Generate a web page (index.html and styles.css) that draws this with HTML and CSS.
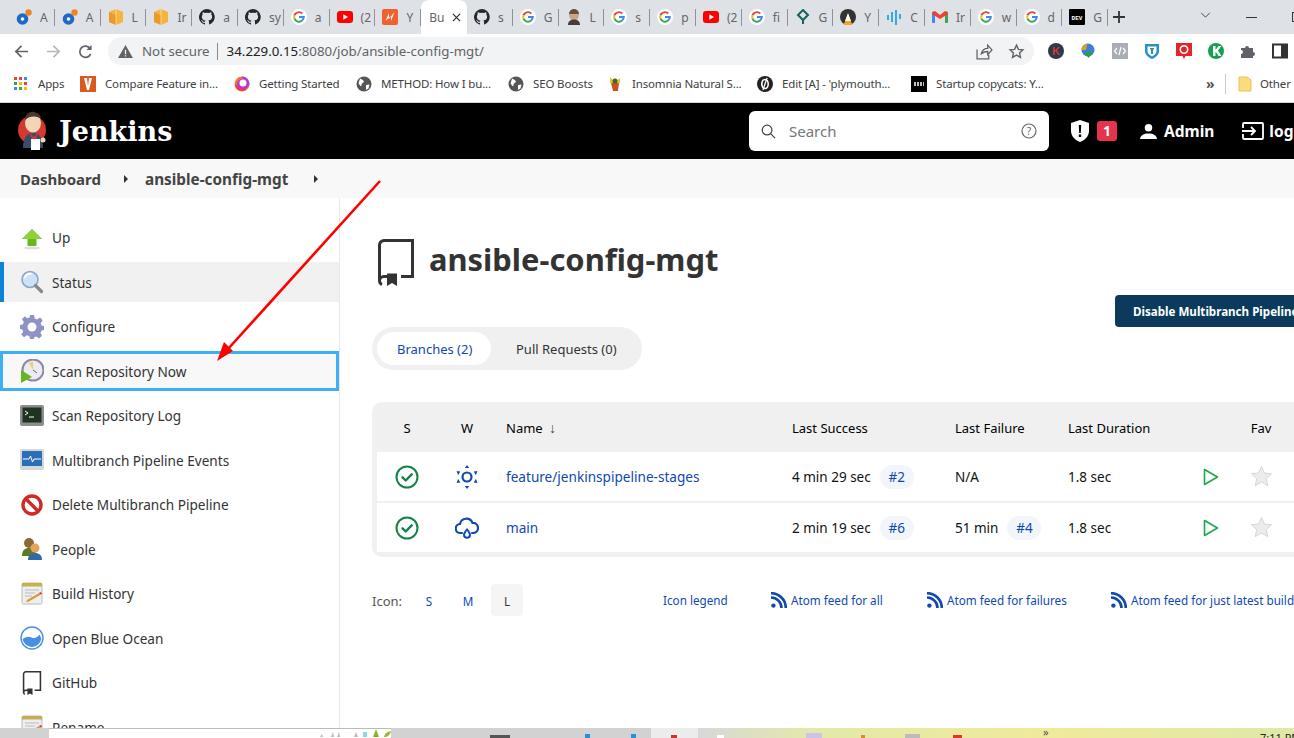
FILE: index.html
```html
<!DOCTYPE html>
<html lang="en">
<head>
<meta charset="utf-8">
<title>ansible-config-mgt [Jenkins]</title>
<link rel="stylesheet" href="styles.css">
</head>
<body>
<svg class="defs" aria-hidden="true">
  <symbol id="g" viewBox="0 0 16 16"><circle cx="8" cy="8" r="8" fill="#fff"/><path d="M4.700 4.600A4.800 4.800 0 0 1 11.300 4.500M3.400 6.400a4.800 4.800 0 0 1 1.300-1.800" fill="none" stroke="#ea4335" stroke-width="2"/><path d="M3.500 6.300a4.800 4.800 0 0 0 0 3.400" fill="none" stroke="#fbbc05" stroke-width="2"/><path d="M3.500 9.700a4.800 4.800 0 0 0 7.600 1.900" fill="none" stroke="#34a853" stroke-width="2"/><path d="M8 8h4.800a4.800 4.800 0 0 1-1.700 3.600" fill="none" stroke="#4285f4" stroke-width="2"/></symbol>
  <symbol id="gh" viewBox="0 0 16 16"><path fill="#24292e" d="M8 0a8 8 0 0 0-2.500 15.600c.4.100.5-.2.500-.4v-1.400c-2.200.5-2.700-1-2.700-1-.4-.9-.9-1.200-.9-1.200-.7-.5.100-.5.100-.5.800.1 1.200.8 1.200.8.700 1.200 1.900.9 2.300.7.100-.5.300-.9.500-1.100-1.800-.2-3.600-.9-3.600-4 0-.9.300-1.600.8-2.100-.1-.2-.4-1 .1-2.100 0 0 .7-.2 2.200.8a7.600 7.600 0 0 1 4 0c1.500-1 2.200-.8 2.200-.8.400 1.100.2 1.900.1 2.100.5.600.8 1.300.8 2.100 0 3.100-1.900 3.700-3.700 3.900.3.300.6.800.6 1.500v2.200c0 .2.100.5.500.4A8 8 0 0 0 8 0z"/></symbol>
  <symbol id="yt" viewBox="0 0 16 16"><rect y="2" width="16" height="12" rx="3" fill="#f00"/><path d="M6.300 5.200v5.600L11 8z" fill="#fff"/></symbol>
  <symbol id="aws" viewBox="0 0 16 16"><path d="M8 0l7 3v10l-7 3-7-3V3z" fill="#f5b33f"/><path d="M8 6.500V16l-7-3V3z" fill="#e99c24"/><path d="M7.500 0h1v16h-1z" fill="#fff" opacity=".5"/></symbol>
  <symbol id="blob" viewBox="0 0 16 16"><circle cx="6.500" cy="10" r="5.800" fill="#1b6ac9"/><circle cx="6.500" cy="10" r="1.800" fill="#fff"/><circle cx="12.500" cy="3.500" r="3.200" fill="#f58220"/></symbol>
  <symbol id="globe" viewBox="0 0 16 16"><circle cx="8" cy="8" r="7.500" fill="#555"/><path d="M4 2.500l3 1.500 1 2-2 1.500-1 3-2.500-3zM10 9l3.500-.5-1 4-2.500 1.500z" fill="#fff"/></symbol>
  <symbol id="star" viewBox="0 0 24 24"><path d="M12 1.500l3.100 6.800 7.300.9-5.400 5 1.500 7.300-6.500-3.700-6.500 3.700L7 14.200l-5.400-5 7.300-.9z"/></symbol>
  <symbol id="book" viewBox="0 0 36 47"><path d="M6 1.500h28.500v36H23M10 37.500H6A4.500 4.500 0 0 0 1.500 42 4 4 0 0 0 4 45.500M1.500 42V6A4.500 4.500 0 0 1 6 1.500" fill="none" stroke="#333" stroke-width="3"/><path d="M9 34.500h10v12.500l-5-3-5 3z" fill="#333"/></symbol>
  <symbol id="ok" viewBox="0 0 24 24"><circle cx="12" cy="12" r="10.500" fill="none" stroke="#138347" stroke-width="2"/><path d="M7.500 12.300l3.200 3.200 6-6.200" fill="none" stroke="#138347" stroke-width="2.400" stroke-linecap="round" stroke-linejoin="round"/></symbol>
  <symbol id="play" viewBox="0 0 16 18"><path d="M1.500 1.500v15L14.500 9z" fill="none" stroke="#1ea64b" stroke-width="1.600" stroke-linejoin="round"/></symbol>
  <symbol id="rss" viewBox="0 0 16 16"><circle cx="2.400" cy="13.600" r="2.200" fill="#1048b0"/><path d="M0 5.500A10.500 10.500 0 0 1 10.500 16M0 1.200A14.800 14.800 0 0 1 14.800 16" fill="none" stroke="#1048b0" stroke-width="2.600"/></symbol>
  <symbol id="note" viewBox="0 0 24 24"><rect x="2" y="1" width="20" height="21" rx="1.500" fill="#eee" stroke="#bbb"/><rect x="2" y="1" width="20" height="3.500" fill="#c9b04f"/><path d="M5 8h14M5 11h10M5 14h7" stroke="#bbb"/><path d="M7 18l12-7 2 1.500-12 7-3 .5z" fill="#d99a3a"/><path d="M19 11l2 1.500 1-1-1.500-1.500z" fill="#c0392b"/></symbol>
</svg>

<div class="browser">
  <div class="tabstrip">
    <div class="tab"><svg class="fav"><use href="#blob"/></svg><span>A</span></div>
    <div class="tab"><svg class="fav"><use href="#blob"/></svg><span>A</span></div>
    <div class="tab"><svg class="fav"><use href="#aws"/></svg><span>L</span></div>
    <div class="tab"><svg class="fav"><use href="#aws"/></svg><span>Ir</span></div>
    <div class="tab"><svg class="fav"><use href="#gh"/></svg><span>a</span></div>
    <div class="tab"><svg class="fav"><use href="#gh"/></svg><span>sy</span></div>
    <div class="tab"><svg class="fav"><use href="#g"/></svg><span>a</span></div>
    <div class="tab"><svg class="fav"><use href="#yt"/></svg><span>(2</span></div>
    <div class="tab"><svg class="fav" viewBox="0 0 16 16"><rect width="16" height="16" rx="2" fill="#f0622d"/><path d="M3.500 12L7 4v6l5.500-7L9 12V7z" fill="#fff"/></svg><span>Y</span></div>
    <div class="tab tab-active"><span>Bu</span><svg class="tab-x" viewBox="0 0 10 10"><path d="M1 1l8 8M9 1l-8 8" stroke="#333" stroke-width="1.400"/></svg></div>
    <div class="tab"><svg class="fav"><use href="#gh"/></svg><span>s</span></div>
    <div class="tab"><svg class="fav"><use href="#g"/></svg><span>G</span></div>
    <div class="tab"><svg class="fav" viewBox="0 0 16 16"><ellipse cx="8" cy="6" rx="5" ry="5.500" fill="#c9a58d"/><path d="M3 5a5 5 0 0 1 10 0H3z" fill="#6b4d3c"/><path d="M2 16c0-4 3-5.500 6-5.500s6 1.500 6 5.500z" fill="#4b3a3a"/></svg><span>L</span></div>
    <div class="tab"><svg class="fav"><use href="#g"/></svg><span>s</span></div>
    <div class="tab"><svg class="fav"><use href="#g"/></svg><span>p</span></div>
    <div class="tab"><svg class="fav"><use href="#yt"/></svg><span>(2</span></div>
    <div class="tab"><svg class="fav"><use href="#g"/></svg><span>fi</span></div>
    <div class="tab"><svg class="fav" viewBox="0 0 16 16"><path d="M8 1l5 5-5 5-5-5zM8 11v4" fill="none" stroke="#14635a" stroke-width="2"/></svg><span>G</span></div>
    <div class="tab"><svg class="fav" viewBox="0 0 16 16"><circle cx="8" cy="8" r="8" fill="#333"/><path d="M8 5l4.500 11h-9z" fill="#f4a62a"/><path d="M8 4l3 8H5z" fill="#fff"/></svg><span>Y</span></div>
    <div class="tab"><svg class="fav" viewBox="0 0 16 16"><path d="M1 6h2v5H1zM5 3h2v10H5zM9 1h2v15H9zM13 5h2v5h-2z" fill="#35a9e0"/></svg><span>C</span></div>
    <div class="tab"><svg class="fav" viewBox="0 0 16 16"><path d="M0 3h3v11H1a1 1 0 0 1-1-1z" fill="#4285f4"/><path d="M13 3h3v10a1 1 0 0 1-1 1h-2z" fill="#34a853"/><path d="M0 3l3-1 5 4 5-4 3 1v2l-8 5-8-5z" fill="#ea4335"/></svg><span>Ir</span></div>
    <div class="tab"><svg class="fav"><use href="#g"/></svg><span>w</span></div>
    <div class="tab"><svg class="fav"><use href="#g"/></svg><span>d</span></div>
    <div class="tab"><svg class="fav" viewBox="0 0 16 16"><rect width="16" height="16" rx="1" fill="#000"/><text x="8" y="11" text-anchor="middle" class="dev">DEV</text></svg><span>G</span></div>
    <svg class="newtab" viewBox="0 0 12 12"><path d="M6 0v12M0 6h12" stroke="#333" stroke-width="1.800"/></svg>
    <div class="winctl">
      <svg class="chev" viewBox="0 0 12 7"><path d="M1 1l5 5 5-5" fill="none" stroke="#333"/></svg>
      <i class="minim"></i>
      <i class="restore"></i>
    </div>
  </div>

  <div class="toolbar">
    <svg class="nav" viewBox="0 0 16 16"><path d="M15 8H2M8 2L2 8l6 6" fill="none" stroke="#5f6368" stroke-width="1.800"/></svg>
    <svg class="nav" viewBox="0 0 16 16"><path d="M1 8h13M8 2l6 6-6 6" fill="none" stroke="#b5b8bc" stroke-width="1.800"/></svg>
    <svg class="nav" viewBox="0 0 16 16"><path d="M13.500 10.500A6 6 0 1 1 13 5" fill="none" stroke="#5f6368" stroke-width="1.800"/><path d="M14.500 1v5.500H9z" fill="#5f6368"/></svg>
    <div class="omnibox">
      <svg class="warn" viewBox="0 0 16 14"><path d="M8 0l8 14H0z" fill="#5f6368"/><path d="M7.300 5h1.400v5H7.300zM7.300 11h1.400v1.400H7.300z" fill="#f1f3f4"/></svg>
      <span class="insecure">Not secure</span>
      <i class="omni-div"></i>
      <span class="url">34.229.0.15<span class="url-dim">:8080/job/ansible-config-mgt/</span></span>
      <svg class="omni-ic" viewBox="0 0 16 16"><path d="M1 6v9h11v-4M5 10c1-4 4-5 6-5V2l4 4.500L11 11V8c-2 0-4 .5-6 2z" fill="none" stroke="#5f6368" stroke-width="1.200"/></svg>
      <svg class="omni-ic star-ic" viewBox="0 0 24 24"><path d="M12 3l2.700 6 6.300.7-4.700 4.300 1.300 6.300-5.600-3.200-5.600 3.200 1.300-6.300L3 9.700 9.300 9z" fill="none" stroke="#5f6368" stroke-width="2"/></svg>
    </div>
    <div class="exts">
      <svg class="ext" viewBox="0 0 16 16"><circle cx="8" cy="8" r="8" fill="#2d3a4a"/><text x="8" y="12" text-anchor="middle" class="ext-k">K</text></svg>
      <svg class="ext" viewBox="0 0 16 16"><circle cx="8" cy="7" r="6.500" fill="#3d7fd1"/><path d="M1.500 7a6.500 6.500 0 0 1 6-6.500L6 7z" fill="#d9a02b"/><path d="M4 9h9l-4.500 6z" fill="#2e9e3f"/></svg>
      <svg class="ext" viewBox="0 0 16 16"><rect width="16" height="16" fill="#a9adb5"/><path d="M5 5L2.500 8 5 11M11 5l2.500 3L11 11M9 4L7 12" fill="none" stroke="#fff" stroke-width="1.200"/></svg>
      <svg class="ext" viewBox="0 0 16 16"><path d="M1 1h14v7c0 4-3.500 6.500-7 8-3.500-1.500-7-4-7-8z" fill="#2a8fd0"/><path d="M3.500 3.500h9V8c0 2.500-2 4-4.500 5.500C5.500 12 3.500 10.500 3.500 8z" fill="#fff"/><path d="M6 5h4v1.500H9V11H7V6.500H6z" fill="#2a8fd0"/></svg>
      <svg class="ext" viewBox="0 0 16 16"><path d="M0 0h16v13H9.500L8 16l-1.500-3H0z" fill="#e3242b"/><circle cx="8" cy="6.500" r="3.700" fill="none" stroke="#fff" stroke-width="1.600"/></svg>
      <svg class="ext" viewBox="0 0 16 16"><circle cx="8" cy="8" r="8" fill="#12a150"/><path d="M5 3h2.500v4L10.500 3h3L10 7.500 13.500 13h-3L7.500 8.500V13H5z" fill="#fff"/></svg>
      <svg class="ext" viewBox="0 0 16 16"><path d="M1 5h4a2 2 0 1 1 4 0h4v4a2 2 0 1 1 0 4v2H1v-4a2 2 0 1 0 0-4z" fill="#5f6368"/></svg>
      <svg class="ext" viewBox="0 0 16 16"><rect x="1" y="1.500" width="14" height="13" fill="none" stroke="#333" stroke-width="2"/><rect x="9" y="2" width="5.500" height="12" fill="#333"/></svg>
    </div>
  </div>

  <div class="bookmarks">
    <div class="bm"><svg class="bm-ic" viewBox="0 0 16 16"><g fill="#ea4335"><rect x="1" y="1" width="3" height="3"/><rect x="6" y="1" width="3" height="3"/></g><rect x="11" y="1" width="3" height="3" fill="#4285f4"/><rect x="1" y="6" width="3" height="3" fill="#34a853"/><rect x="6" y="6" width="3" height="3" fill="#fbbc05"/><rect x="11" y="6" width="3" height="3" fill="#ea4335"/><rect x="1" y="11" width="3" height="3" fill="#4285f4"/><rect x="6" y="11" width="3" height="3" fill="#34a853"/><rect x="11" y="11" width="3" height="3" fill="#fbbc05"/></svg>Apps</div>
    <div class="bm"><svg class="bm-ic" viewBox="0 0 16 16"><rect width="16" height="16" fill="#d9591f"/><path d="M4 2h3l1 8 1-8h3l-3 12H7z" fill="#fff"/></svg>Compare Feature in...</div>
    <div class="bm"><svg class="bm-ic" viewBox="0 0 16 16"><circle cx="8" cy="8" r="7.500" fill="#f6752d"/><path d="M8 .5A7.500 7.500 0 0 1 15.500 8 6 6 0 0 1 8 13 5 5 0 0 1 8 3z" fill="#b23bd1"/><circle cx="9" cy="7" r="3.500" fill="#fff"/><path d="M1 8a7 7 0 0 0 11 5.500L6 12z" fill="#f32f5e"/></svg>Getting Started</div>
    <div class="bm"><svg class="bm-ic"><use href="#globe"/></svg>METHOD: How I bu...</div>
    <div class="bm"><svg class="bm-ic"><use href="#globe"/></svg>SEO Boosts</div>
    <div class="bm"><svg class="bm-ic" viewBox="0 0 16 16"><path d="M3 1l3 3 2-2 1 3 4-3v5H3z" fill="#e7c42c"/><path d="M4 7h8l-1 8H6z" fill="#c9531f"/><circle cx="8" cy="5" r="2.500" fill="#3c6c2e"/></svg>Insomnia Natural S...</div>
    <div class="bm"><svg class="bm-ic" viewBox="0 0 16 16"><circle cx="8" cy="8" r="8" fill="#222"/><ellipse cx="8" cy="8" rx="3.200" ry="4.500" fill="none" stroke="#fff" stroke-width="1.600"/><path d="M10 2L6 14" stroke="#fff" stroke-width="1.300"/></svg>Edit [A] - 'plymouth...</div>
    <div class="bm"><svg class="bm-ic" viewBox="0 0 16 16"><rect width="16" height="16" fill="#000"/><path d="M3 7h10M3 9h10" stroke="#fff" stroke-width="1.600" stroke-dasharray="2 1"/></svg>Startup copycats: Y...</div>
    <div class="bm-end">
      <span class="bm-more">»</span><i class="bm-div"></i>
      <svg class="bm-ic bm-folder" viewBox="0 0 16 16"><path d="M2 1h8l4 3v11H2z" fill="#fbdc7c" stroke="#e9c158"/></svg><span>Other</span>
    </div>
  </div>
</div>

<header class="jk-head">
  <svg class="jk-logo" viewBox="0 0 30 40"><circle cx="14" cy="19" r="14" fill="#d33833"/><ellipse cx="15" cy="12" rx="8" ry="9.500" fill="#f0d6b7"/><path d="M7 9c0-6 5-9 9-8s7 3 7 7c-3-3-11-4-16 1z" fill="#49392f"/><path d="M5 37c0-10 4-15 10-15s10 5 10 15z" fill="#3b4c6b"/><path d="M12 22l4 4 4-4-2 6h-4z" fill="#d33833"/><rect x="13" y="28" width="9" height="11" fill="#fff"/><circle cx="25" cy="29" r="2.500" fill="#f0d6b7"/></svg>
  <div class="jk-name">Jenkins</div>
  <div class="jk-search">
    <svg class="search-ic" viewBox="0 0 16 16"><circle cx="6.500" cy="6.500" r="5.200" fill="none" stroke="#444" stroke-width="1.300"/><path d="M10.500 10.500l4.500 4.500" stroke="#444" stroke-width="1.300"/></svg>
    <span class="search-ph">Search</span>
    <svg class="help-ic" viewBox="0 0 16 16"><circle cx="8" cy="8" r="7" fill="none" stroke="#666" stroke-width="1.200"/><text x="8" y="11.500" text-anchor="middle" class="help-q">?</text></svg>
  </div>
  <svg class="shield" viewBox="0 0 18 22"><path d="M9 0l9 3v8c0 5-4 9-9 11-5-2-9-6-9-11V3z" fill="#fff"/><path d="M7.800 5h2.400l-.4 8H8.200zM7.800 14.500h2.400V17H7.800z" fill="#000"/></svg>
  <span class="jk-badge">1</span>
  <svg class="user-ic" viewBox="0 0 18 16"><circle cx="9" cy="4" r="4" fill="#fff"/><path d="M0 16c0-4 4-6 9-6s9 2 9 6z" fill="#fff"/></svg>
  <span class="jk-user">Admin</span>
  <svg class="out-ic" viewBox="0 0 22 18"><path d="M1 6V2a1 1 0 0 1 1-1h18a1 1 0 0 1 1 1v14a1 1 0 0 1-1 1H2a1 1 0 0 1-1-1v-4M0 9h13M9 5l4 4-4 4" fill="none" stroke="#fff" stroke-width="1.800"/></svg>
  <span class="jk-out">log out</span>
</header>

<nav class="crumbs">
  <a class="crumb crumb-a">Dashboard</a>
  <i class="caret caret-a"></i>
  <a class="crumb crumb-b">ansible-config-mgt</a>
  <i class="caret"></i>
</nav>

<div class="page">
  <aside class="side">
    <a class="item"><svg class="ic" viewBox="0 0 24 24"><path d="M12 3l10 10h-5.500v7h-9v-7H2z" fill="#6cb61e"/><path d="M12 3l10 10H2z" fill="#8fd13f"/><ellipse cx="12" cy="22" rx="8" ry="1.500" fill="#ddd"/></svg>Up</a>
    <a class="item item-cur"><svg class="ic" viewBox="0 0 24 24"><circle cx="10" cy="9.500" r="8" fill="#cfe2f5" stroke="#8aa7c8" stroke-width="1.600"/><path d="M4.500 8a6 6 0 0 1 7-4" fill="none" stroke="#fff" stroke-width="2"/><path d="M15.500 15.500l6 6" stroke="#888" stroke-width="3.200" stroke-linecap="round"/></svg>Status</a>
    <a class="item"><svg class="ic" viewBox="0 0 24 24"><path d="M10 0h4l.6 3.500 2.500 1L20 2.500 22.800 5.300 20.700 8.200l1 2.500L24 11v4l-2.500.6-1 2.500 1.500 2.700-2.800 2.800-2.900-2-2.500 1L14 24h-4l-.6-2.800-2.500-1-2.900 2L1.200 19.400l2-2.700-1-2.500L0 14v-4l2.800-.6 1-2.500L2 4.100 4.800 1.300l2.400 2 2.500-1z" fill="#8f92c4"/><circle cx="12" cy="12" r="4.500" fill="#fff"/></svg>Configure</a>
    <a class="item item-focus"><svg class="ic" viewBox="0 0 24 24"><circle cx="13" cy="11" r="10.500" fill="#ecebf2" stroke="#8b89a6" stroke-width="2"/><path d="M13 11V3a8 8 0 0 0-4 1z" fill="#e8cf72"/><path d="M13 11l4 3" stroke="#666"/><path d="M1 11l11 7-11 6z" fill="#64b51f"/></svg>Scan Repository Now</a>
    <a class="item"><svg class="ic" viewBox="0 0 24 24"><rect y="1" width="24" height="21" rx="2" fill="#8b8f8b"/><rect x="2.500" y="3.500" width="19" height="15" fill="#1f3320"/><path d="M5 7l3 2-3 2M9 13h5" fill="none" stroke="#fff"/></svg>Scan Repository Log</a>
    <a class="item"><svg class="ic" viewBox="0 0 24 24"><rect y="1" width="24" height="21" rx="2" fill="#d6d6d6"/><rect x="2" y="3" width="20" height="15" fill="#2c6fb8"/><path d="M3 11h6l1.500-3 2 6 1.500-3h7" fill="none" stroke="#fff"/></svg>Multibranch Pipeline Events</a>
    <a class="item"><svg class="ic" viewBox="0 0 24 24"><circle cx="12" cy="12" r="9" fill="#fff" stroke="#cf2a27" stroke-width="3.400"/><path d="M6 6l12 12" stroke="#cf2a27" stroke-width="3.400"/></svg>Delete Multibranch Pipeline</a>
    <a class="item"><svg class="ic" viewBox="0 0 24 24"><circle cx="9" cy="6" r="5" fill="#8a6a36"/><path d="M2 19c0-6 3-8 7-8s7 2 7 8z" fill="#5e7a28"/><circle cx="15" cy="11" r="4.500" fill="#e3a35a"/><path d="M8 23c0-5 3-7 7-7s7 2 7 7z" fill="#2f69a8"/></svg>People</a>
    <a class="item"><svg class="ic"><use href="#note"/></svg>Build History</a>
    <a class="item"><svg class="ic" viewBox="0 0 24 24"><circle cx="12" cy="12" r="11" fill="#fff" stroke="#4a90e2" stroke-width="1.400"/><path d="M2.500 13c4-2 6-3 9-1.500s6 0 8-3l1.800 4A9.500 9.500 0 0 1 2.500 13z" fill="#4a90e2"/></svg>Open Blue Ocean</a>
    <a class="item"><svg class="ic"><use href="#book"/></svg>GitHub</a>
    <a class="item"><svg class="ic"><use href="#note"/></svg>Rename</a>
  </aside>

  <main class="main">
    <div class="title">
      <svg class="title-ic"><use href="#book"/></svg>
      <h1>ansible-config-mgt</h1>
    </div>
    <div class="actions"><button class="disable">Disable Multibranch Pipeline</button></div>
    <div class="pills">
      <a class="pill pill-on">Branches (2)</a>
      <a class="pill">Pull Requests (0)</a>
    </div>

    <div class="table">
      <div class="row row-head">
        <span class="c">S</span><span class="c">W</span><span class="n">Name <em class="sort">↓</em></span><span>Last Success</span><span>Last Failure</span><span>Last Duration</span><span></span><span class="c">Fav</span>
      </div>
      <div class="row row-body">
        <span class="c"><svg class="st"><use href="#ok"/></svg></span>
        <span class="c"><svg class="wx" viewBox="0 0 24 24"><circle cx="12" cy="12" r="4.500" fill="none" stroke="#1048b0" stroke-width="2.200"/><path d="M12 0l2.200 3h-4.400zM12 24l2.200-3h-4.400zM1.600 6l3.700.4-2.200 3.800zM22.400 6l-3.700.4 2.200 3.800zM1.600 18l3.700-.4-2.200-3.800zM22.400 18l-3.700-.4 2.200-3.800z" fill="#1048b0"/></svg></span>
        <a class="n link">feature/jenkinspipeline-stages</a>
        <span class="when">4 min 29 sec <a class="num">#2</a></span>
        <span class="when">N/A</span>
        <span>1.8 sec</span>
        <span class="c"><svg class="run"><use href="#play"/></svg></span>
        <span class="c"><svg class="fav-star"><use href="#star"/></svg></span>
      </div>
      <div class="row row-body">
        <span class="c"><svg class="st"><use href="#ok"/></svg></span>
        <span class="c"><svg class="wx" viewBox="0 0 24 24"><path d="M7 17H5.500A4.500 4.500 0 0 1 5 8a6.500 6.500 0 0 1 12.500-1 5 5 0 0 1 1 10H17" fill="none" stroke="#1048b0" stroke-width="2.200" stroke-linecap="round"/><path d="M12 13.500c2 2.500 3 3.800 3 5.200a3 3 0 0 1-6 0c0-1.400 1-2.700 3-5.200z" fill="none" stroke="#1048b0" stroke-width="2"/></svg></span>
        <a class="n link">main</a>
        <span class="when">2 min 19 sec <a class="num">#6</a></span>
        <span class="when">51 min <a class="num">#4</a></span>
        <span>1.8 sec</span>
        <span class="c"><svg class="run"><use href="#play"/></svg></span>
        <span class="c"><svg class="fav-star"><use href="#star"/></svg></span>
      </div>
    </div>

    <div class="legend">
      <div class="sizes">
        <span class="size-label">Icon:</span>
        <a class="size">S</a><a class="size">M</a><a class="size size-on">L</a>
      </div>
      <a class="lnk">Icon legend</a>
      <a class="lnk"><svg class="rss"><use href="#rss"/></svg>Atom feed for all</a>
      <a class="lnk"><svg class="rss"><use href="#rss"/></svg>Atom feed for failures</a>
      <a class="lnk"><svg class="rss"><use href="#rss"/></svg>Atom feed for just latest builds</a>
    </div>
  </main>
</div>

<footer class="taskbar">
  <span class="tb-start"></span>
  <span class="tb-search"></span>
  <span class="tb-mid"></span>
  <span class="tb-active"></span>
  <span class="tb-tray"><span class="tb-more">»</span><span class="tb-time">7:11 PM</span></span>
  <svg class="tb-icons" viewBox="0 0 1294 10" aria-hidden="true">
    <path d="M320 9l2-3 1 3zM331 9l2-5 1 5zM337 9l2-5 1 5zM354 9l2-5 2 5z" fill="#bbb"/>
    <path d="M363 4h4v5h-4z" fill="#8cd6e6"/><path d="M376 1l3 8h-6z" fill="#8db32a"/><path d="M384 9c1-4 3-5 7-6-1 4-3 6-7 6z" fill="#9ab93a"/>
    <rect x="490" y="7" width="20" height="3" fill="#555"/><rect x="585" y="6" width="5" height="4" fill="#2b8fd6"/><rect x="631" y="6" width="5" height="4" fill="#2b8fd6"/>
    <rect x="671" y="7" width="6" height="3" fill="#c9342c"/><rect x="717" y="7" width="7" height="3" fill="#fff"/><rect x="806" y="5" width="16" height="5" fill="#c9c4e8"/>
    <rect x="861" y="7" width="4" height="3" fill="#d98a2a"/><rect x="905" y="6" width="15" height="4" fill="#bbb"/><rect x="953" y="7" width="9" height="3" fill="#d93b2b"/>
  </svg>
</footer>

<svg class="arrow" viewBox="0 0 1294 738" aria-hidden="true">
  <path d="M380 181L228 349" stroke="#f00" stroke-width="2.600" fill="none"/>
  <path d="M217 361l7-19 9 9z" fill="#f00"/>
</svg>
</body>
</html>
```
FILE: styles.css
```css
* { box-sizing: border-box; }
html, body { margin: 0; padding: 0; height: 738px; width: 1294px; overflow: hidden; background: #fff; }
body { display: flex; flex-direction: column; font-family: "Noto Sans", "Open Sans", sans-serif; color: #333; position: relative; }
a { color: inherit; text-decoration: none; }
.defs { position: absolute; width: 0; height: 0; }

/* browser chrome */
.browser { height: 103px; flex: none; background: #fff; border-bottom: 1px solid #d8d8d8; }
.tabstrip { height: 34px; background: #dee1e6; display: flex; align-items: center; padding-left: 9px; }
.tab { width: 45.8px; height: 34px; flex: none; display: flex; align-items: center; gap: 8px; padding-left: 7px; overflow: hidden; font-size: 12px; color: #666; white-space: nowrap; position: relative; }
.tab::after { content: ""; position: absolute; right: 0; top: 9px; height: 17px; width: 1px; background: #8f9296; }
.tab-active { background: #fff; border-radius: 8px 8px 0 0; padding-left: 8px; justify-content: space-between; padding-right: 10px; }
.tab-active::after { display: none; }
.tab-x { width: 9px; height: 9px; flex: none; }
.fav { width: 16px; height: 16px; flex: none; }
.dev { font: bold 6px "Liberation Mono", monospace; fill: #fff; }
.newtab { width: 12px; height: 12px; margin-left: 5px; flex: none; }
.winctl { display: flex; align-items: center; margin-left: 75px; gap: 35px; }
.chev { width: 11px; height: 6px; margin-bottom: 4px; }
.minim { width: 11px; height: 1px; background: #333; }
.restore { width: 10px; height: 10px; border: 1px solid #333; }

.toolbar { height: 34px; display: flex; align-items: center; padding-left: 14px; }
.nav { width: 15px; height: 15px; margin-right: 17px; flex: none; }
.omnibox { width: 926px; height: 28px; margin-left: -2px; background: #f1f3f4; border-radius: 14px; display: flex; align-items: center; padding-left: 10px; font-size: 13.3px; flex: none; }
.warn { width: 15px; height: 13px; flex: none; }
.insecure { margin-left: 9px; color: #5f6368; }
.omni-div { width: 1px; height: 17px; background: #888; margin: 0 9px 0 7px; }
.url { color: #202124; flex: 1; }
.url-dim { color: #5f6368; }
.omni-ic { width: 17px; height: 17px; flex: none; margin-right: 15px; }
.star-ic { margin-right: 9px; }
.exts { display: flex; margin-left: 14px; gap: 16px; }
.ext { width: 16px; height: 16px; flex: none; }
.ext-k { font: bold 11px "Liberation Sans", sans-serif; fill: #d33; }

.bookmarks { height: 31px; display: grid; grid-template-columns: 67px 154px 122px 152px 99px 150px 154px 293px 1fr; padding-left: 13px; font-size: 11.5px; letter-spacing: -.15px; color: #3c4043; align-items: center; }
.bm { display: flex; align-items: center; white-space: nowrap; }
.bm-ic { width: 16px; height: 16px; flex: none; margin-right: 9px; }
.bm-end { display: flex; align-items: center; white-space: nowrap; }
.bm-more { width: 21px; padding-left: 2px; font-size: 14px; color: #555; font-weight: 700; }
.bm-div { width: 1px; height: 20px; background: #ccc; margin-right: 11px; }
.bm-folder { margin-right: 7px; }

/* jenkins header */
.jk-head { height: 56px; flex: none; background: #000; display: flex; align-items: center; color: #fff; padding-left: 18px; white-space: nowrap; overflow: hidden; }
.jk-logo { width: 30px; height: 40px; flex: none; }
.jk-name { font: bold 27px "DejaVu Serif", serif; margin-left: 11px; width: 690px; flex: none; }
.jk-search { width: 300px; height: 40px; background: #fff; border-radius: 6px; display: flex; align-items: center; padding: 0 12px; flex: none; }
.search-ic { width: 15px; height: 15px; flex: none; }
.search-ph { flex: 1; margin-left: 13px; font-size: 15px; color: #767676; }
.help-ic { width: 16px; height: 16px; flex: none; }
.help-q { font: 10px "Noto Sans", sans-serif; fill: #666; }
.shield { width: 18px; height: 22px; margin-left: 22px; flex: none; }
.jk-badge { width: 20px; height: 20px; border-radius: 3px; background: #e6324b; margin-left: 8px; font-size: 14px; font-weight: 700; text-align: center; line-height: 20px; flex: none; }
.user-ic { width: 17px; height: 15px; margin-left: 23px; flex: none; }
.jk-user { font-size: 15.5px; font-weight: 700; margin-left: 7px; flex: none; }
.out-ic { width: 22px; height: 18px; margin-left: 28px; flex: none; }
.jk-out { font-size: 15.5px; font-weight: 700; margin-left: 5px; flex: none; }

/* breadcrumbs */
.crumbs { height: 39px; flex: none; background: #f8f8f8; display: flex; align-items: center; padding-left: 20px; font-size: 15px; font-weight: 700; color: #444; white-space: nowrap; }
.crumb-a { width: 104px; }
.crumb-b { width: 147px; font-size: 15.3px; }
.caret { width: 0; height: 0; border-left: 4px solid #333; border-top: 4px solid transparent; border-bottom: 4px solid transparent; margin: 0 0 0 22px; }
.caret-a { margin: 0 17px 0 0; }

/* page */
.page { flex: 1; display: flex; min-height: 0; overflow: hidden; }
.side { width: 340px; flex: none; border-right: 1px solid #e9e9e9; padding-top: 19.6px; display: flex; flex-direction: column; gap: 4.5px; overflow: hidden; }
.item { height: 40px; flex: none; display: flex; align-items: center; gap: 8px; padding-left: 20px; font-size: 13.6px; color: #333; }
.ic { width: 24px; height: 24px; flex: none; }
.item-cur { background: #f1f1f1; border-left: 4px solid #0a84d6; padding-left: 16px; margin-right: -1px; }
.item-focus { background: #f8f8f8; border: 3px solid #3db0f5; padding-left: 17px; }

.main { flex: 1; min-width: 0; padding: 40px 0 0 32px; overflow: hidden; }
.title { height: 48px; display: flex; align-items: center; color: #333; }
.title-ic { width: 36px; height: 47px; flex: none; margin-left: 6px; }
.title h1 { margin: -6px 0 0 15px; font-size: 30.9px; font-weight: 700; color: #333; white-space: nowrap; }
.actions { height: 32px; margin-top: 9px; padding-left: 743px; white-space: nowrap; }
.disable { height: 32px; width: 220px; border: 0; background: #0b3a5c; color: #fff; font: 700 11.6px "Noto Sans", sans-serif; text-align: left; padding: 0 0 0 18px; border-radius: 4px; white-space: nowrap; }
.pills { display: inline-flex; height: 43px; padding: 5px; background: #f0f0f0; border-radius: 22px; font-size: 13px; width: 270px; }
.pill { height: 33px; line-height: 35px; padding: 0 20px; border-radius: 17px; width: 114px; white-space: nowrap; }
.pill + .pill { padding-left: 25px; width: 146px; }
.pill-on { background: #fff; color: #1048b0; }

.table { width: 960px; height: 155px; margin-top: 32px; background: #f0f0f0; border-radius: 10px; padding: 0 0 5px 5px; font-size: 13.5px; color: #111; }
.row { display: grid; grid-template-columns: 60px 60px 286px 163px 113px 127px 50px 50px 1fr; align-items: center; white-space: nowrap; }
.row > span:nth-child(n+4), .row > .n { padding-left: 9px; }
.row > span.c { padding-left: 0; }
.row-head { height: 50px; font-size: 13px; color: #000; padding-top: 1px; }
.row-body { height: 49px; background: #fff; margin-bottom: 2px; }
.row-body + .row-body { margin-bottom: 0; }
.c { text-align: center; display: flex; justify-content: center; align-items: center; }
.sort { font-style: normal; font-size: 14px; line-height: 1; color: #444; margin-left: 3px; }
.link { color: #1048b0; font-size: 13.6px; }
.st { width: 24px; height: 24px; }
.wx { width: 24px; height: 24px; }
.run { width: 16px; height: 18px; }
.fav-star { width: 23px; height: 23px; fill: #ececec; stroke: #d4d4d4; }
.when { display: flex; align-items: center; }
.num { margin-left: 9px; width: 34px; height: 24px; line-height: 24px; border-radius: 12px; background: #f2f5fb; color: #1048b0; text-align: center; }

.legend { height: 32px; margin-top: 27px; display: grid; grid-template-columns: 291px 108px 156px 184px 1fr; align-items: center; font-size: 11.7px; color: #1048b0; white-space: nowrap; }
.sizes { display: flex; align-items: center; gap: 7px; }
.size-label { color: #555; font-size: 13px; width: 34px; padding-top: 1px; }
.size { width: 32px; height: 32px; line-height: 34px; text-align: center; border-radius: 4px; }
.size-on { background: #f5f5f5; color: #333; }
.lnk { display: flex; align-items: center; gap: 4px; }
.rss { width: 16px; height: 16px; flex: none; }

/* taskbar */
.taskbar { height: 10px; flex: none; display: flex; background: #d2d2d2; overflow: hidden; position: relative; }
.tb-start { width: 49px; }
.tb-search { width: 342px; background: #fff; border-top: 1px solid #bbb; }
.tb-mid { width: 260px; }
.tb-active { width: 47px; background: #ececec; }
.tb-tray { flex: 1; background: linear-gradient(90deg, #d8d8d8, #e4e9a8 20%, #f0ea9a 60%, #dfe8a8); display: flex; font-size: 11px; color: #222; }
.tb-more { margin-left: 345px; line-height: 8px; color: #555; }
.tb-time { margin-left: auto; padding: 4px 0 0 0; line-height: 12px; white-space: nowrap; width: 34px; }
.tb-icons { position: absolute; left: 0; top: 0; width: 1294px; height: 10px; }

.arrow { position: absolute; left: 0; top: 0; width: 1294px; height: 738px; pointer-events: none; }
```
